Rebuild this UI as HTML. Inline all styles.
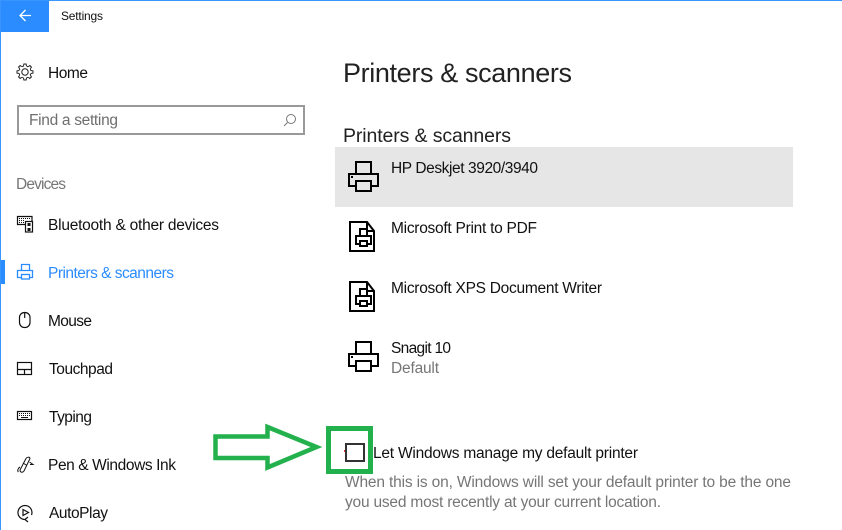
<!DOCTYPE html>
<html><head><meta charset="utf-8"><title>Settings</title>
<style>
html,body{margin:0;padding:0;background:#fff;width:842px;height:530px;overflow:hidden}
svg{display:block}
text{font-family:"Liberation Sans",sans-serif;fill:#111;font-size:15px}
.g{fill:#767676}
.i{fill:none;stroke:#111;stroke-width:1.2}
.p{fill:none;stroke:#000;stroke-width:2}
</style></head><body>
<svg width="842" height="530" viewBox="0 0 842 530" xmlns="http://www.w3.org/2000/svg">
<rect width="842" height="530" fill="#fff"/>
<rect x="0" y="0" width="842" height="1" fill="#3a96ff"/>
<rect x="0" y="0" width="1" height="530" fill="#3a96ff"/>
<rect x="1" y="1" width="48" height="31" fill="#2b8cff"/>
<path d="M31 15.5H20M25.5 10L20 15.5L25.5 21" fill="none" stroke="#fff" stroke-width="1.3"/>
<text x="61" y="20" style="font-size:12px" textLength="42">Settings</text>

<!-- Home gear -->
<g transform="translate(25 72)" fill="none" stroke="#222" stroke-width="1">
<circle r="3.2"/>
<circle r="6" stroke-dasharray="1.71 3" stroke-dashoffset="3.21"/>
<path d="M-1.5 -6L-1.1 -8H1.1L1.5 -6"/>
<path d="M-1.5 -6L-1.1 -8H1.1L1.5 -6" transform="rotate(45)"/>
<path d="M-1.5 -6L-1.1 -8H1.1L1.5 -6" transform="rotate(90)"/>
<path d="M-1.5 -6L-1.1 -8H1.1L1.5 -6" transform="rotate(135)"/>
<path d="M-1.5 -6L-1.1 -8H1.1L1.5 -6" transform="rotate(180)"/>
<path d="M-1.5 -6L-1.1 -8H1.1L1.5 -6" transform="rotate(225)"/>
<path d="M-1.5 -6L-1.1 -8H1.1L1.5 -6" transform="rotate(270)"/>
<path d="M-1.5 -6L-1.1 -8H1.1L1.5 -6" transform="rotate(315)"/>
</g>
<text x="48" y="78" style="font-size:15.5px" textLength="40">Home</text>

<!-- Search -->
<rect x="18" y="106" width="286" height="28" fill="#fff" stroke="#999" stroke-width="2"/>
<text x="29" y="125" style="fill:#6e6e6e;font-size:15.5px" textLength="89">Find a setting</text>
<g fill="none" stroke="#777" stroke-width="1"><circle cx="291" cy="119" r="4.5"/><path d="M287.5 122.5L284 126"/></g>

<text x="16" y="189" class="g" style="font-size:15.5px" textLength="50">Devices</text>

<!-- Bluetooth -->
<g class="i"><path d="M25 224.5H17.5V216.5H32V221"/><rect x="25.5" y="221.5" width="7" height="10.5"/></g>
<path d="M19 218.5h11M19 220.5h5M19 222.5h5" stroke="#111" stroke-dasharray="1 1" fill="none"/>
<rect x="27.5" y="223" width="3" height="3" fill="#111"/><rect x="27.5" y="228" width="3" height="3" fill="#111"/>
<text x="48" y="230" style="font-size:15.5px" textLength="171">Bluetooth &amp; other devices</text>

<!-- Printers selected -->
<rect x="1" y="260" width="4" height="24" fill="#2b8cff"/>
<g fill="none" stroke="#2b8cff" stroke-width="1.3"><path d="M21.5 270.5V264.5H29.5V270.5M21.5 277.5H17.5V270.5H32.5V277.5H29.5"/><rect x="21.5" y="274.5" width="8" height="4.5"/></g>
<text x="48" y="278" style="fill:#2b8cff;font-size:15.5px" textLength="126">Printers &amp; scanners</text>

<!-- Mouse -->
<g class="i"><rect x="19.5" y="312.5" width="10.5" height="15" rx="5"/><path d="M24.7 312.5V318"/></g>
<text x="48" y="326" style="font-size:15.5px" textLength="44">Mouse</text>

<!-- Touchpad -->
<g class="i"><rect x="17.5" y="362.5" width="14" height="12"/><path d="M17.5 369.5H31.5M24.5 369.5V374.5"/></g>
<text x="49" y="374" style="font-size:15.5px" textLength="64">Touchpad</text>

<!-- Typing -->
<g class="i"><rect x="17.5" y="411.5" width="14" height="8"/></g>
<path d="M19 413.5h11M19 415.5h11" stroke="#111" stroke-dasharray="1 1" fill="none"/><path d="M21 417.5h7" stroke="#111"/>
<text x="49" y="422" style="font-size:15.5px" textLength="43">Typing</text>

<!-- Pen -->
<g fill="none" stroke="#111" stroke-width="1"><path d="M20 470L26 458.5C27 457 29.5 456.5 30 458.5L24 471C22.5 473 20 472.5 20 470ZM23 463L27 465.5M29.5 462L33 464.5L30 464.5M20 467C18 468 17 471 18.5 472"/></g>
<text x="48" y="470" style="font-size:15.5px" textLength="128">Pen &amp; Windows Ink</text>

<!-- AutoPlay -->
<g class="i"><path d="M25 519.5A7 7 0 1 1 31.5 515M28 517L25 519.5L28 522"/><path d="M23 509.5L28.5 512.5L23 515.5Z"/></g>
<text x="49" y="518" style="font-size:15.5px" textLength="59">AutoPlay</text>

<!-- Right pane -->
<text x="343" y="82" style="font-size:27px;fill:#222" textLength="229">Printers &amp; scanners</text>
<text x="343" y="142" style="font-size:19.5px;fill:#222" textLength="168">Printers &amp; scanners</text>
<rect x="335" y="147" width="458" height="60" fill="#e6e6e6"/>

<g class="p"><path d="M356 173V162H371V173M355 186H349V174H378V186H372"/><rect x="356" y="181" width="15" height="10"/></g>
<rect x="351" y="176" width="2" height="2" fill="#000"/>
<text x="391" y="173" style="font-size:15.5px" textLength="147">HP Deskjet 3920/3940</text>

<g class="p"><path d="M350 222H367L374 231V251H350ZM367 222V231H374"/>
<path d="M360 236V229H367V236M360 244H356V236H371V244H367"/><rect x="360" y="241" width="7" height="5"/></g>
<text x="391" y="233" style="font-size:15.5px" textLength="146">Microsoft Print to PDF</text>

<g class="p"><path d="M350 282H367L374 291V311H350ZM367 282V291H374"/>
<path d="M360 296V289H367V296M360 304H356V296H371V304H367"/><rect x="360" y="301" width="7" height="5"/></g>
<text x="391" y="293" style="font-size:15.5px" textLength="211">Microsoft XPS Document Writer</text>

<g class="p"><path d="M356 353V342H371V353M355 366H349V354H378V366H372"/><rect x="356" y="361" width="15" height="10"/></g>
<rect x="351" y="356" width="2" height="2" fill="#000"/>
<text x="391" y="353" style="font-size:15.5px" textLength="60">Snagit 10</text>
<text x="391" y="373" class="g" style="font-size:15.5px" textLength="48">Default</text>

<!-- Checkbox -->
<rect x="346" y="444" width="18" height="17" fill="#fff" stroke="#333" stroke-width="2"/>
<rect x="344" y="450" width="1" height="2" fill="#d33"/>
<text x="373" y="458" style="font-size:15.5px" textLength="265">Let Windows manage my default printer</text>
<text x="345" y="487" class="g" style="font-size:15.5px" textLength="446">When this is on, Windows will set your default printer to be the one</text>
<text x="345" y="507" class="g" style="font-size:15.5px" textLength="316">you used most recently at your current location.</text>

<!-- Annotation -->
<rect x="328.5" y="428.5" width="42" height="43" fill="none" stroke="#22b14c" stroke-width="5"/>
<path d="M215.5 436.5H267.5V427L316.5 447L267.5 467.5V458H215.5Z" fill="none" stroke="#22b14c" stroke-width="4.5"/>
</svg>
</body></html>
